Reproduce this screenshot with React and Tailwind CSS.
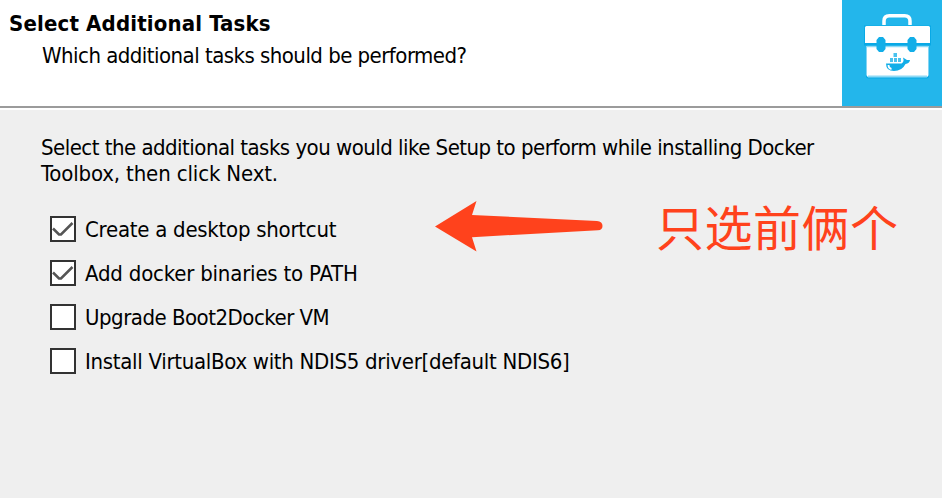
const TEXT = "block w-max whitespace-nowrap font-['DejaVu_Sans_Condensed','DejaVu_Sans',sans-serif] text-[22px] leading-[26px] text-black";

const TASKS = [
  { label: 'Create a desktop shortcut', checked: true, spacing: 'tracking-[-0.26px]' },
  { label: 'Add docker binaries to PATH', checked: true, spacing: 'tracking-[-0.2px]' },
  { label: 'Upgrade Boot2Docker VM', checked: false, spacing: 'tracking-[-0.5px]' },
  { label: 'Install VirtualBox with NDIS5 driver[default NDIS6]', checked: false, spacing: 'tracking-[-0.3px]' },
];

function ToolboxLogo() {
  return (
    <svg className="block h-[106px] w-[100px] shrink-0 bg-[#23b6eb]" viewBox="0 0 100 106">
      <path d="M22 25.5h67v20h-2v30.500q0 2.500-2.500 2.500h-58q-2.500 0-2.500-2.500v-30.500h-2z" fill="#08a9e6" />
      <path d="M42 25v-4q0-5.300 5.300-5.300h15.400q5.300 0 5.300 5.300v4" fill="none" stroke="#fff" strokeWidth="3.500" />
      <path d="M24.500 26h62q1.500 0 1.500 1.500v15.500h-65v-15.500q0-1.500 1.500-1.500z" fill="#fff" />
      <path d="M24.500 46h62v28.500q0 2.500-2.500 2.500h-57q-2.500 0-2.500-2.500z" fill="#fff" />
      <path d="M24.500 46.500h62" stroke="#8fdaf5" strokeWidth="1.500" />
      <path d="M26 76.500h59" stroke="#8fdaf5" strokeWidth="2" />
      <path d="M37 37h4l2.500 3v9l-2.500 3h-4l-2.500-3v-9zM68 37h4l2.500 3v9l-2.500 3h-4l-2.500-3v-9z" fill="#12aee8" />
      <path d="M44 63.500h15.500q3-1.500 1.500-6l4 2.500h3q-.5 3.500-4.500 4-3.500 7-11.500 7-8 0-8-7.500z" fill="#12aee8" />
      <path d="M48 58h3v4h-3zM51.500 53h3.500v4h-3.500zM52 58h3v4h-3zM56 58h3v4h-3z" fill="#49c2ee" />
      <path d="M46.500 65q0 3.500 3 4" fill="none" stroke="#fff" strokeWidth="1.800" />
    </svg>
  );
}

function Checkbox({ checked }) {
  return (
    <span className="block h-[26px] w-[26px] shrink-0 border-2 border-[#333] bg-white">
      {checked && (
        <svg className="block h-[22px] w-[22px]" viewBox="0 0 22 22">
          <path d="M1 10.500L7 16.500H9L20.500 5" fill="none" stroke="#555" strokeWidth="2.500" />
        </svg>
      )}
    </span>
  );
}

export default function App() {
  return (
    <div className="flex h-[498px] w-[942px] flex-col overflow-hidden bg-[#efefef]">
      <header className="flex h-[110px] shrink-0 justify-between bg-white">
        <div className="pl-[9px] pt-[11px]">
          <h1 className={`${TEXT} font-bold tracking-[0.16px]`}>Select Additional Tasks</h1>
          <p className={`${TEXT} mt-[6px] pl-[33px] tracking-[-0.53px]`}>Which additional tasks should be performed?</p>
        </div>
        <ToolboxLogo />
      </header>
      <div className="-mt-1 h-1 shrink-0 border-t-2 border-[#9b9b9b] bg-white" />
      <main className="flex flex-col pt-[25px]">
        <p className={`${TEXT} pl-[41px]`}>
          <span className="block w-max tracking-[-0.52px]">Select the additional tasks you would like Setup to perform while installing Docker</span>
          <span className="block w-max tracking-[-0.14px]">Toolbox, then click Next.</span>
        </p>
        <div className="mt-[10px] flex pl-[50px]">
          <ul className="flex w-[385px] shrink-0 flex-col gap-[18px] pt-[19px]">
            {TASKS.map((t) => (
              <li key={t.label} className="flex h-[26px] gap-[9px]">
                <Checkbox checked={t.checked} />
                <span className={`${TEXT} mt-px ${t.spacing}`}>{t.label}</span>
              </li>
            ))}
          </ul>
          <svg className="mt-[3px] block h-[52px] w-[169px] shrink-0" viewBox="435 200 169 52">
            <path d="M435 226.500L476.500 201L472 215L597 221Q602.500 221.500 602.500 226Q602.500 230 598 230.300L472 237.200L476.500 251.500Z" fill="#ff421c" />
          </svg>
          <span className="ml-[52px] whitespace-nowrap font-['Noto_Sans_CJK_SC',sans-serif] text-[48px] leading-[56px] tracking-[0.5px] text-[#ff421c]">只选前俩个</span>
        </div>
      </main>
    </div>
  );
}
